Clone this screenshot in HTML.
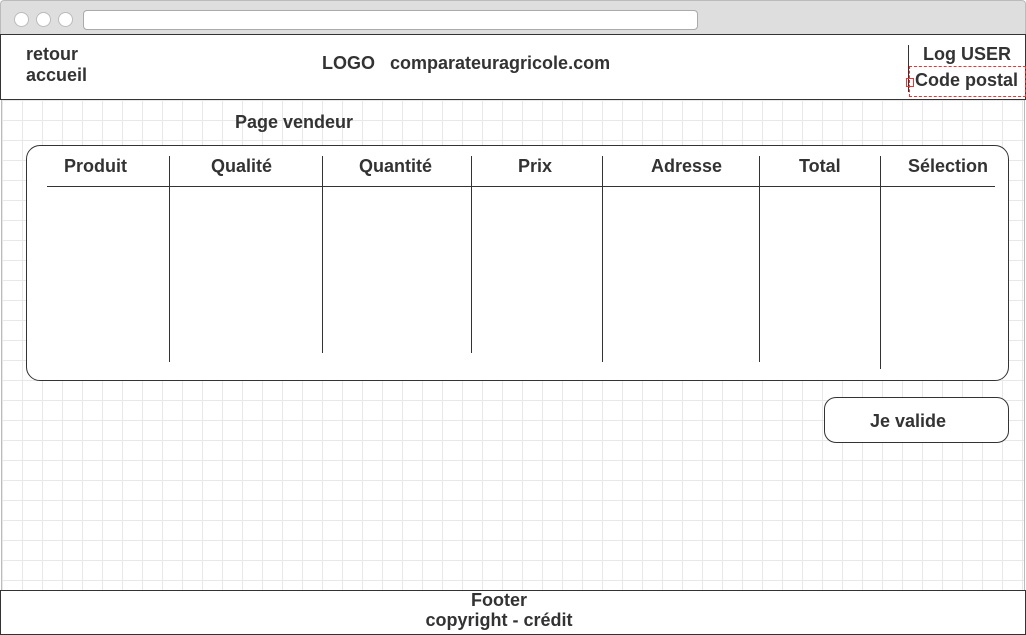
<!DOCTYPE html>
<html><head><style>
*{margin:0;padding:0;box-sizing:border-box}
body{width:1026px;height:635px;position:relative;overflow:hidden;font-family:"Liberation Sans",sans-serif;font-weight:bold;color:#333;background:#fff}
.chrome{position:absolute;left:0;top:0;width:1026px;height:35px;background:#dedede;border:1px solid #bbb;border-bottom:none;border-radius:4px 4px 0 0}
.dot{position:absolute;top:11px;width:15px;height:15px;border-radius:50%;background:#fff;border:1px solid #bbb}
.url{position:absolute;left:82px;top:9px;width:615px;height:20px;background:#fff;border:1px solid #aaa;border-radius:4px}
.page{position:absolute;left:1px;top:34px;width:1024px;height:600px;border-left:1px solid #bbb;border-right:1px solid #bbb;
background-color:#fff;background-image:linear-gradient(#e8e8e8 1px,transparent 1px),linear-gradient(90deg,#e8e8e8 1px,transparent 1px);background-size:20px 20px;background-position:0 6px}
.hdr{position:absolute;left:0;top:34px;width:1026px;height:66px;background:#fff;border:1px solid #333}
.ftr{position:absolute;left:0;top:590px;width:1026px;height:45px;background:#fff;border:1px solid #333;font-size:18px;line-height:20px}
.t{position:absolute;font-size:18px;white-space:nowrap}
.tbl{position:absolute;left:26px;top:145px;width:983px;height:236px;border:1px solid #333;border-radius:14px;background:#fff}
.v{position:absolute;width:1px;background:#333;top:156px}
.btn{position:absolute;left:824px;top:397px;width:185px;height:46px;border:1px solid #333;border-radius:12px;background:#fff}
</style></head><body>
<div class="chrome"><div class="dot" style="left:13px"></div><div class="dot" style="left:35px"></div><div class="dot" style="left:57px"></div><div class="url"></div></div>
<div class="page"></div>
<div class="hdr"></div>
<div class="t" style="left:26px;top:44px;line-height:21px">retour<br>accueil</div>
<div class="t" style="left:322px;top:53px">LOGO &nbsp;&nbsp;comparateuragricole.com</div>
<div style="position:absolute;left:908px;top:45px;width:1px;height:47px;background:#333"></div>
<div class="t" style="left:923px;top:44px">Log USER</div>
<div style="position:absolute;left:909px;top:66px;width:117px;height:31px;border:1px dashed #e33"></div>
<div style="position:absolute;left:906px;top:78px;width:8px;height:9px;border:1px solid #e33"></div>
<div class="t" style="left:915px;top:70px">Code postal</div>
<div class="t" style="left:235px;top:112px">Page vendeur</div>
<div class="tbl"></div>
<div class="t" style="left:64px;top:156px">Produit</div>
<div class="t" style="left:211px;top:156px">Qualité</div>
<div class="t" style="left:359px;top:156px">Quantité</div>
<div class="t" style="left:518px;top:156px">Prix</div>
<div class="t" style="left:651px;top:156px">Adresse</div>
<div class="t" style="left:799px;top:156px">Total</div>
<div class="t" style="left:908px;top:156px">Sélection</div>
<div style="position:absolute;left:47px;top:186px;width:948px;height:1px;background:#333"></div>
<div class="v" style="left:169px;height:206px"></div>
<div class="v" style="left:322px;height:197px"></div>
<div class="v" style="left:471px;height:197px"></div>
<div class="v" style="left:602px;height:206px"></div>
<div class="v" style="left:759px;height:206px"></div>
<div class="v" style="left:880px;height:213px"></div>
<div class="btn"></div>
<div class="t" style="left:870px;top:411px">Je valide</div>
<div class="ftr"></div>
<div class="t" style="left:399px;width:200px;text-align:center;top:590px;line-height:20px">Footer<br>copyright - crédit</div>
</body></html>
